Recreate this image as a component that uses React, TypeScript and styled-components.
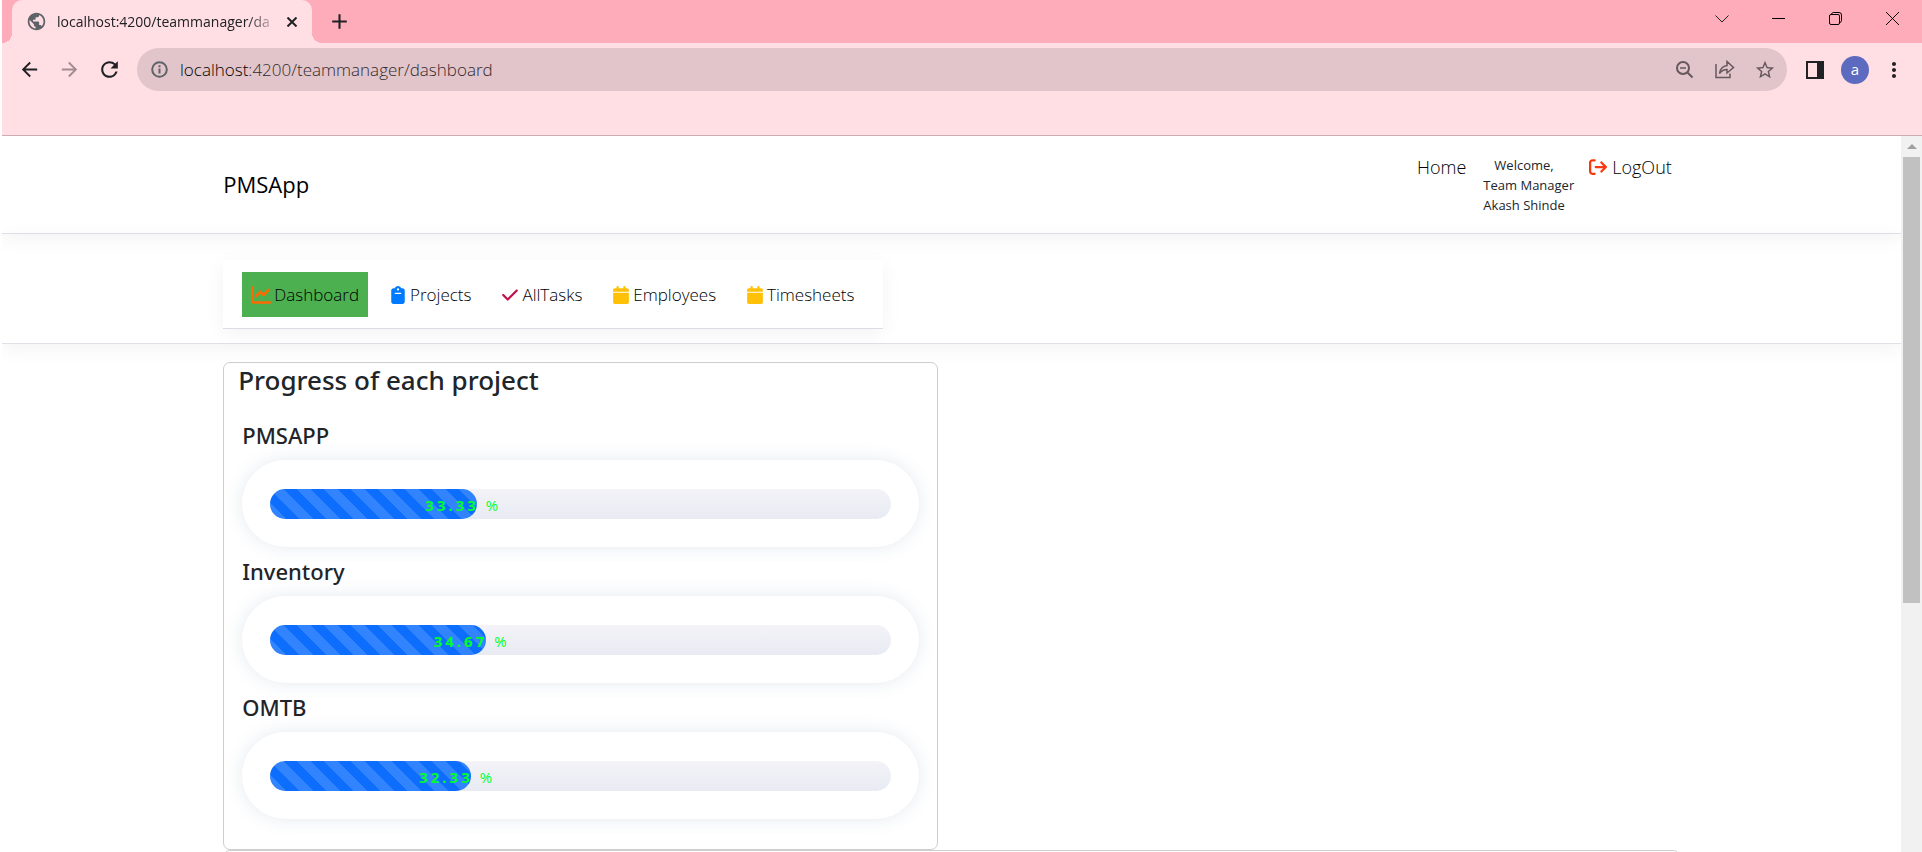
import React from 'react';
import styled, { createGlobalStyle } from 'styled-components';
import { FaArrowRightFromBracket, FaChartLine, FaClipboard, FaCheck, FaCalendar } from 'react-icons/fa6';
import { MdPublic, MdAdd, MdArrowBack, MdArrowForward, MdRefresh, MdStarBorder, MdMoreVert } from 'react-icons/md';

const Global = createGlobalStyle`
  * { box-sizing: border-box; }
  html, body, #root { height: 100%; }
  body { margin: 0; overflow: hidden; background: #fff; color: #000; font-weight: 300;
    font-family: "Open Sans", "Noto Sans", sans-serif; }
  button { font: inherit; color: inherit; background: none; border: 0; padding: 0; display: flex; align-items: center; justify-content: center; }
  a { color: inherit; text-decoration: none; }
  h1, h2, p { margin: 0; padding: 0; font-weight: inherit; }
  svg { display: block; flex: none; }
`;

const Window = styled.div`
  height: 100%;
  min-height: 0;
  padding-left: 2px;
  display: flex;
  flex-direction: column;
`;

const TabStrip = styled.div`
  height: 43px;
  flex: none;
  background: #ffacba;
  display: flex;
  align-items: stretch;
  padding-left: 10px;
`;

const Tab = styled.div`
  width: 300px;
  background: #ffdee4;
  border-radius: 10px 10px 0 0;
  display: flex;
  align-items: center;
  padding: 0 11px 0 14px;
  position: relative;
  color: #5f6368;
  &::before, &::after {
    content: "";
    position: absolute;
    bottom: 0;
    width: 10px;
    height: 10px;
  }
  &::before { left: -10px; background: radial-gradient(circle at 0 0, transparent 10px, #ffdee4 10px); }
  &::after { right: -10px; background: radial-gradient(circle at 100% 0, transparent 10px, #ffdee4 10px); }
`;

const TabTitle = styled.span`
  flex: 1;
  min-width: 0;
  margin: 0 0 0 10px;
  white-space: nowrap;
  font-size: 14px;
  font-weight: 400;
  color: #202124;
  mask-image: linear-gradient(90deg, #000 190px, transparent 222px);
`;

const IconButton = styled.button<{ $size?: number; $color?: string }>`
  && {
    width: ${p => p.$size ?? 40}px;
    height: ${p => p.$size ?? 40}px;
    color: ${p => p.$color ?? '#202124'};
  }
`;

const NewTab = styled(IconButton)`
  align-self: center;
  margin-left: 7px;
`;

const WindowControls = styled.div`
  margin-left: auto;
  padding-right: 1px;
  display: flex;
  align-items: center;
  height: 37px;
`;

const WindowButton = styled.button`
  width: 57px;
  height: 37px;
`;

const Toolbar = styled.div`
  flex: none;
  height: 93px;
  background: #ffdee4;
  border-bottom: 1px solid #ccabb5;
  padding: 5px 8px 0 7px;
  display: flex;
  align-items: flex-start;
`;

const ToolGroup = styled.div`
  display: flex;
  align-items: center;
  height: 43px;
`;

const Omnibox = styled.div`
  flex: 1;
  height: 43px;
  border-radius: 22px;
  background: #e1c5ca;
  margin: 0 8px;
  padding: 0 2px 0 14px;
  display: flex;
  align-items: center;
  color: #5f6368;
`;

const Address = styled.p`
  flex: 1;
  margin-left: 12px;
  font-size: 17px;
  color: #33292c;
  & > span { color: #000; }
`;

const Avatar = styled.button`
  && {
    width: 28px;
    height: 28px;
    margin: 0 5px 0 6px;
    border-radius: 50%;
    background: #5c6bc0;
    color: #fff;
    font-size: 15px;
    font-weight: 400;
    padding-bottom: 2px;
  }
`;

const Viewport = styled.div`
  flex: 1;
  min-height: 0;
  display: flex;
`;

const Page = styled.div`
  flex: 1;
  min-width: 0;
  overflow: hidden;
`;

const Container = styled.div`
  padding: 0 11.65%;
`;

const Band = styled.div`
  border-bottom: 1px solid #dee2e6;
  box-shadow: 0 5px 20px rgba(0, 0, 0, 0.05);
`;

const SiteHeader = styled(Band).attrs({ as: 'header' })`
  height: 98px;
`;

const HeaderRow = styled(Container)`
  height: 100%;
  display: flex;
  align-items: flex-start;
`;

const Brand = styled.a`
  margin: 33px auto 0 0;
  font-size: 22px;
  line-height: 30px;
  font-weight: 400;
`;

const Menu = styled.div`
  display: flex;
  align-items: flex-start;
  padding-right: 8px;
`;

const HeaderLink = styled.a`
  display: flex;
  align-items: center;
  gap: 5px;
  margin-top: 18px;
  font-size: 18px;
  line-height: 26px;
`;

const Welcome = styled.div`
  margin: 19px 15px 0 17px;
  font-size: 13px;
  line-height: 20px;
  font-weight: 400;
  color: #212529;
  & > p:first-child { padding-left: 11px; }
`;

const NavBand = styled(Band)`
  padding: 26px 0 15px;
  height: 110px;
`;

const Nav = styled.nav`
  width: max-content;
  height: 69px;
  padding: 12px 20px 12px 19px;
  border-bottom: 1px solid #dcdce6;
  box-shadow: 0 5px 20px rgba(0, 0, 0, 0.05);
  display: flex;
  gap: 12px;
`;

const NavLink = styled.a<{ $active?: boolean; $tint: string }>`
  height: 45px;
  padding: 0 9px;
  display: flex;
  align-items: center;
  gap: 3px;
  font-size: 17px;
  background: ${p => (p.$active ? '#4caf50' : 'transparent')};
  & > svg { color: ${p => p.$tint}; }
`;

const Card = styled.section`
  border: 1px solid #ccced0;
  border-radius: 7px;
`;

const ProgressCard = styled(Card)`
  width: 49.1%;
  margin-top: 18px;
  padding: 0 18px 21px;
`;

const SummaryCard = styled(Card)`
  height: 300px;
`;

const CardTitle = styled.h1`
  margin-left: -4px;
  padding-bottom: 23px;
  font-family: "Noto Sans", sans-serif;
  font-size: 26px;
  line-height: 34px;
  font-weight: 500;
  color: #212529;
`;

const Project = styled.section`
  height: 136px;
`;

const ProjectName = styled.h2`
  font-family: "Noto Sans", sans-serif;
  font-size: 22px;
  line-height: 30px;
  height: 40px;
  font-weight: 500;
  color: #212529;
`;

const Capsule = styled.div`
  height: 87px;
  padding: 29px 28px 28px;
  border-radius: 44px;
  box-shadow: 0 0 18px rgba(50, 90, 130, 0.13);
`;

const Track = styled.div`
  height: 30px;
  border-radius: 15px;
  background: linear-gradient(#f3f3f8, #e8ebf3);
`;

const Fill = styled.div`
  height: 30px;
  border-radius: 15px;
  position: relative;
  background: #0d6efd linear-gradient(45deg, rgba(255,255,255,.15) 25%, transparent 25%, transparent 50%, rgba(255,255,255,.15) 50%, rgba(255,255,255,.15) 75%, transparent 75%) 0 0 / 27px 27px;
`;

const Percent = styled.span`
  position: absolute;
  right: -24px;
  top: 6px;
  white-space: pre;
  font-size: 15px;
  line-height: 20px;
  font-weight: 400;
  letter-spacing: 3px;
  color: #00ff2a;
`;

const ScrollBar = styled.div`
  width: 21px;
  background: #f1f1f1;
  display: flex;
  flex-direction: column;
  align-items: center;
`;

const ScrollUp = styled.button`
  width: 21px;
  height: 21px;
`;

const ScrollThumb = styled.div`
  width: 17px;
  height: 62.3%;
  background: #c1c1c1;
`;

const projects = [
  { name: 'PMSAPP', value: 33.33 },
  { name: 'Inventory', value: 34.67 },
  { name: 'OMTB', value: 32.33 },
];

const links = [
  { label: 'Dashboard', icon: <FaChartLine size={20} />, tint: '#ff6a00', active: true },
  { label: 'Projects', icon: <FaClipboard size={18} />, tint: '#007bff' },
  { label: 'AllTasks', icon: <FaCheck size={18} />, tint: '#c2104a' },
  { label: 'Employees', icon: <FaCalendar size={18} />, tint: '#ffc107' },
  { label: 'Timesheets', icon: <FaCalendar size={18} />, tint: '#ffc107' },
];

export default function App() {
  return (
    <Window>
      <Global />
      <TabStrip>
        <Tab>
          <MdPublic size={21} />
          <TabTitle>localhost:4200/teammanager/da</TabTitle>
          <IconButton $size={18} aria-label="Close tab">
            <svg width="10" height="10" stroke="currentColor" strokeWidth="2"><path d="M0.5 0.5 9.5 9.5M9.5 0.5 0.5 9.5" /></svg>
          </IconButton>
        </Tab>
        <NewTab aria-label="New tab"><MdAdd size={25} /></NewTab>
        <WindowControls>
          <WindowButton aria-label="Search tabs">
            <svg width="14" height="8" fill="none" stroke="#222"><path d="M0.5 0.5 7 7 13.5 0.5" /></svg>
          </WindowButton>
          <WindowButton aria-label="Minimize">
            <svg width="13" height="1"><path d="M0 0.5H13" stroke="#000" /></svg>
          </WindowButton>
          <WindowButton aria-label="Restore">
            <svg width="13" height="13" fill="none" stroke="#000"><rect x="0.5" y="2.5" width="10" height="10" rx="1.5" /><path d="M2.5 2Q3 0.5 4.5 0.5H10Q12.5 0.5 12.5 3V8.5Q12.5 10 11 10.5" /></svg>
          </WindowButton>
          <WindowButton aria-label="Close">
            <svg width="13" height="13" stroke="#000"><path d="M0 0 13 13M13 0 0 13" /></svg>
          </WindowButton>
        </WindowControls>
      </TabStrip>
      <Toolbar>
        <ToolGroup>
          <IconButton aria-label="Back"><MdArrowBack size={23} /></IconButton>
          <IconButton aria-label="Forward" $color="#a18c91"><MdArrowForward size={23} /></IconButton>
          <IconButton aria-label="Reload"><MdRefresh size={25} /></IconButton>
        </ToolGroup>
        <Omnibox>
          <svg width="17" height="17" fill="none" stroke="currentColor" strokeWidth="2"><circle cx="8.5" cy="8.5" r="7.3" /><path d="M8.5 7.5V12.5M8.5 4.3V6.2" /></svg>
          <Address><span>localhost</span>:4200/teammanager/dashboard</Address>
          <IconButton $color="#66585c" aria-label="Zoom">
            <svg width="18" height="18" fill="none" stroke="currentColor" strokeWidth="2"><circle cx="7" cy="7" r="6" /><path d="M11.5 11.5 16.5 16.5" /><path d="M4 7H10" strokeWidth="1.5" /></svg>
          </IconButton>
          <IconButton $color="#66585c" aria-label="Share">
            <svg width="20" height="19" fill="none" stroke="currentColor" strokeWidth="1.5"><path d="M1 4V17.5H15V13.5M4.5 13.5Q5.5 6.5 12 5.5V1.5L18.5 7.5 12 13V9.5Q7.5 9.5 4.5 13.5Z" /></svg>
          </IconButton>
          <IconButton $color="#66585c" aria-label="Bookmark"><MdStarBorder size={22} /></IconButton>
        </Omnibox>
        <ToolGroup>
          <IconButton aria-label="Side panel">
            <svg width="18" height="18"><path d="M0 0H18V18H0ZM2 2V16H11V2Z" fill="currentColor" fillRule="evenodd" /></svg>
          </IconButton>
          <Avatar aria-label="Profile">a</Avatar>
          <IconButton aria-label="Menu"><MdMoreVert size={24} /></IconButton>
        </ToolGroup>
      </Toolbar>
      <Viewport>
        <Page>
          <SiteHeader>
            <HeaderRow>
              <Brand href="#">PMSApp</Brand>
              <Menu>
                <HeaderLink href="#">Home</HeaderLink>
                <Welcome>
                  <p>Welcome,</p>
                  <p>Team Manager</p>
                  <p>Akash Shinde</p>
                </Welcome>
                <HeaderLink href="#"><FaArrowRightFromBracket size={18} color="#f8390f" />LogOut</HeaderLink>
              </Menu>
            </HeaderRow>
          </SiteHeader>
          <NavBand>
            <Container>
              <Nav>
                {links.map(l => (
                  <NavLink key={l.label} href="#" $active={l.active} $tint={l.tint}>{l.icon}{l.label}</NavLink>
                ))}
              </Nav>
            </Container>
          </NavBand>
          <Container as="main">
            <ProgressCard>
              <CardTitle>Progress of each project</CardTitle>
              {projects.map(p => (
                <Project key={p.name}>
                  <ProjectName>{p.name}</ProjectName>
                  <Capsule>
                    <Track role="progressbar" aria-label={p.name} aria-valuenow={p.value}>
                      <Fill style={{ width: `${p.value}%` }}>
                        <Percent><b>{p.value}</b> %</Percent>
                      </Fill>
                    </Track>
                  </Capsule>
                </Project>
              ))}
            </ProgressCard>
            <SummaryCard />
          </Container>
        </Page>
        <ScrollBar>
          <ScrollUp aria-label="Scroll up"><svg width="10" height="5"><path d="M0 5 5 0 10 5Z" fill="#a0a0a0" /></svg></ScrollUp>
          <ScrollThumb />
        </ScrollBar>
      </Viewport>
    </Window>
  );
}
